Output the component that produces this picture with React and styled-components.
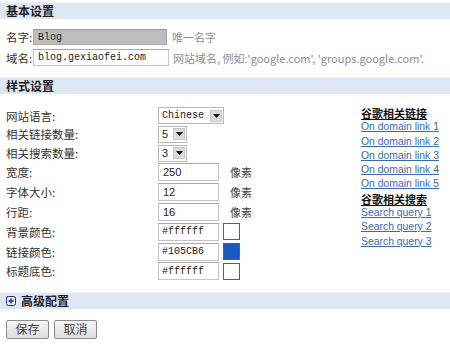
import React from "react";
import styled, { createGlobalStyle } from "styled-components";

const GlobalStyle = createGlobalStyle`
  html, body { margin: 0; padding: 0; background: #fff; }
  body {
    font-family: "Liberation Sans", "Noto Sans CJK SC", sans-serif;
    font-size: 12px;
    color: #333;
  }
`;

const CJK = `"Noto Sans CJK SC", "Liberation Sans", sans-serif`;
const MONO = `"Liberation Mono", "DejaVu Sans Mono", monospace`;

const Page = styled.div`
  width: 450px;
  padding-top: 2px;
`;

const SectionBar = styled.div`
  height: 16px;
  background: #dfe7f5;
  border-top: 1px solid #eef2f9;
  display: flex;
  align-items: center;
  gap: 5px;
  padding-left: 6px;
  font-family: ${CJK};
  font-weight: bold;
  font-size: 12px;
  line-height: 16px;
  color: #1e1e1e;
`;

const BasicBody = styled.div`
  padding: 10px 0 11px 6px;
  display: flex;
  flex-direction: column;
  gap: 4px;
`;

const Row = styled.div`
  display: flex;
  align-items: center;
  height: ${(p) => p.$h || 17}px;
`;

const ShortLabel = styled.span`
  flex: 0 0 27px;
  white-space: nowrap;
  font-family: ${CJK};
  font-size: 11.5px;
  line-height: 14px;
  color: #333;
`;

const TextBox = styled.div`
  box-sizing: border-box;
  flex: 0 0 auto;
  width: ${(p) => p.$w}px;
  height: ${(p) => p.$h || 17}px;
  border: 1px solid ${(p) => (p.$disabled ? "#a8a8a8" : "#c4c4c4")};
  border-top-color: ${(p) => (p.$disabled ? "#999" : "#a9a9a9")};
  background: ${(p) => (p.$disabled ? "#bdbdbd" : "#fff")};
  display: flex;
  align-items: center;
  padding-left: ${(p) => p.$pl ?? 4}px;
  font-family: ${(p) => (p.$mono ? MONO : `"Liberation Sans", sans-serif`)};
  font-size: ${(p) => (p.$mono ? 10 : 11)}px;
  color: #222;
  white-space: nowrap;
`;

const Hint = styled.span`
  margin-left: ${(p) => p.$ml || 5}px;
  font-family: ${CJK};
  font-size: 11px;
  color: #8e8e8e;
  white-space: nowrap;
`;

const StyleBody = styled.div`
  display: flex;
  padding: 13px 0 11.6px 6px;
`;

const FormGrid = styled.div`
  width: 355px;
  display: grid;
  grid-template-columns: 152px auto;
  grid-template-rows: repeat(3, 17px) repeat(6, 18px);
  row-gap: 1.8px;
  align-items: center;
`;

const FieldLabel = styled.span`
  font-family: ${CJK};
  font-size: 11.5px;
  line-height: 14px;
  color: #333;
  white-space: nowrap;
`;

const Control = styled.div`
  display: flex;
  align-items: center;
`;

const SelectBox = styled.div`
  box-sizing: border-box;
  width: ${(p) => p.$w}px;
  height: 17px;
  border: 1px solid #b5b8bd;
  background: #fff;
  display: flex;
  align-items: center;
  justify-content: space-between;
  padding: 0 1px 0 3px;
  font-family: ${(p) => (p.$mono ? MONO : `"Liberation Sans", sans-serif`)};
  font-size: ${(p) => (p.$mono ? 10 : 11)}px;
  color: #222;
`;

const ArrowBtn = styled.span`
  box-sizing: border-box;
  width: 12px;
  height: 12px;
  background: #dcdcdc;
  border: 1px solid #c6c6c6;
  display: flex;
  align-items: center;
  justify-content: center;
`;

const Unit = styled.span`
  margin-left: 11px;
  font-family: ${CJK};
  font-size: 11px;
  color: #444;
`;

const Swatch = styled.span`
  box-sizing: border-box;
  width: 17px;
  height: 17px;
  margin-left: 4px;
  border: 1px solid #4c5f95;
  background: ${(p) => p.$color};
`;

const SideCol = styled.div`
  display: flex;
  flex-direction: column;
  margin-top: -1px;
  font-size: 10px;
  line-height: 14.3px;
`;

const SideHead = styled.span`
  font-family: ${CJK};
  font-weight: bold;
  font-size: 11px;
  color: #111;
  text-decoration: underline;
`;

const SideLink = styled.a`
  font-family: "Liberation Sans", sans-serif;
  font-size: 10.4px;
  color: #3a6cab;
  text-decoration: underline;
  cursor: pointer;
`;

const Actions = styled.div`
  display: flex;
  gap: 5px;
  padding: 11px 0 0 6px;
`;

const Button = styled.button`
  box-sizing: border-box;
  width: 43px;
  height: 19px;
  padding: 0;
  border: 1px solid #8c8c8c;
  border-radius: 2px;
  background: linear-gradient(#f4f4f4, #dedede);
  font-family: ${CJK};
  font-size: 12px;
  line-height: 16px;
  color: #444;
`;

const Arrow = () => (
  <svg width="7" height="4" viewBox="0 0 7 4">
    <path d="M0 0H7L3.5 4Z" fill="#111" />
  </svg>
);

const PlusIcon = () => (
  <svg width="10" height="10" viewBox="0 0 10 10">
    <rect x="0.5" y="0.5" width="9" height="9" rx="2" fill="#e9eefa" stroke="#1c2f7a" />
    <path d="M2.5 5H7.5M5 2.5V7.5" stroke="#1c2f7a" strokeWidth="1.4" />
  </svg>
);

const rows = [
  { label: "网站语言:", type: "select", value: "Chinese", w: 66, mono: true },
  { label: "相关链接数量:", type: "select", value: "5", w: 29 },
  { label: "相关搜索数量:", type: "select", value: "3", w: 29 },
  { label: "宽度:", type: "num", value: "250" },
  { label: "字体大小:", type: "num", value: "12" },
  { label: "行距:", type: "num", value: "16" },
  { label: "背景颜色:", type: "color", value: "#ffffff", color: "#fff" },
  { label: "链接颜色:", type: "color", value: "#105CB6", color: "#1a58c4" },
  { label: "标题底色:", type: "color", value: "#ffffff", color: "#fff" },
];

export default function App() {
  return (
    <Page>
      <GlobalStyle />
      <SectionBar>基本设置</SectionBar>
      <BasicBody>
        <Row $h={16}>
          <ShortLabel>名字:</ShortLabel>
          <TextBox $w={134} $h={16} $disabled $mono>Blog</TextBox>
          <Hint>唯一名字</Hint>
        </Row>
        <Row $h={17}>
          <ShortLabel>域名:</ShortLabel>
          <TextBox $w={136} $h={17} $mono>blog.gexiaofei.com</TextBox>
          <Hint $ml={4}>网站域名, 例如:'google.com', 'groups.google.com'.</Hint>
        </Row>
      </BasicBody>

      <SectionBar>样式设置</SectionBar>
      <StyleBody>
        <FormGrid>
          {rows.map((r) => (
            <React.Fragment key={r.label}>
              <FieldLabel>{r.label}</FieldLabel>
              <Control>
                {r.type === "select" && (
                  <SelectBox $w={r.w} $mono={r.mono}>
                    {r.value}
                    <ArrowBtn>
                      <Arrow />
                    </ArrowBtn>
                  </SelectBox>
                )}
                {r.type === "num" && (
                  <>
                    <TextBox $w={61} $h={18}>{r.value}</TextBox>
                    <Unit>像素</Unit>
                  </>
                )}
                {r.type === "color" && (
                  <>
                    <TextBox $w={61} $h={18} $mono $pl={3}>{r.value}</TextBox>
                    <Swatch $color={r.color} />
                  </>
                )}
              </Control>
            </React.Fragment>
          ))}
        </FormGrid>
        <SideCol>
          <SideHead>谷歌相关链接</SideHead>
          {[1, 2, 3, 4, 5].map((n) => (
            <SideLink key={n}>On domain link {n}</SideLink>
          ))}
          <SideHead>谷歌相关搜索</SideHead>
          {[1, 2, 3].map((n) => (
            <SideLink key={n}>Search query {n}</SideLink>
          ))}
        </SideCol>
      </StyleBody>

      <SectionBar>
        <PlusIcon />
        高级配置
      </SectionBar>
      <Actions>
        <Button>保存</Button>
        <Button>取消</Button>
      </Actions>
    </Page>
  );
}
